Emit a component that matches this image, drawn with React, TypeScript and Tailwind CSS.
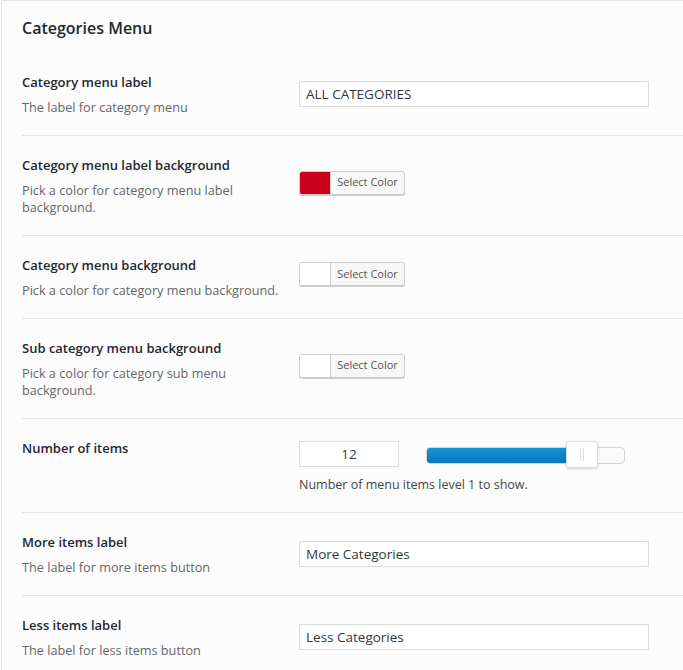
import React from 'react';

const font = { fontFamily: '"Open Sans", "Noto Sans", Arial, sans-serif' };

const Label: React.FC<{ title: string; desc?: string }> = ({ title, desc }) => (
    <div className="w-[277px] shrink-0 self-start pr-[12px]">
        <div className="text-[13px] font-semibold leading-[18px] text-[#23282d]">{title}</div>
        {desc && <div className="mt-[8px] mb-[-1px] text-[12.7px] leading-[17px] text-[#666]">{desc}</div>}
    </div>
);

const TextInput: React.FC<{ value: string }> = ({ value }) => (
    <div className="flex h-[26px] w-[350px] items-center border border-[#ddd] bg-white pl-[6px] text-[13.5px] text-[#32373c] shadow-[inset_0_1px_2px_rgba(0,0,0,0.04)]">
        {value}
    </div>
);

const ColorButton: React.FC<{ color: string }> = ({ color }) => (
    <div className="mb-[6px] flex h-[24px] w-[106px] overflow-hidden rounded-[3px] border border-[#ccc] bg-[#f7f7f7] shadow-[0_1px_0_#ccc]">
        <div className="w-[31px] border-r border-[#ccc]" style={{ backgroundColor: color }} />
        <div className="flex flex-1 items-center justify-center text-[11px] text-[#555]">Select Color</div>
    </div>
);

const Row: React.FC<{ children: React.ReactNode; last?: boolean }> = ({ children, last }) => (
    <div className={`flex pt-[20px] pb-[20px] ${last ? '' : 'border-b border-[#e5e5e5]'}`}>{children}</div>
);

const Slider: React.FC = () => (
    <div className="relative ml-[27px] mt-[3px] h-[17px] w-[199px]">
        <div className="flex h-full w-full overflow-hidden rounded-[4px] border border-[#d5d5d5] bg-[#fafafa]">
            <div className="h-full w-[146px] bg-gradient-to-b from-[#1492d6] to-[#0679bc]" />
        </div>
        <div className="absolute left-[140px] top-[-6px] flex h-[27px] w-[32px] items-center justify-center gap-[2px] rounded-[3px] border border-[#dcdcdc] bg-white shadow-[0_1px_3px_rgba(0,0,0,0.15)]">
            <div className="h-[13px] w-px bg-[#ddd]" />
            <div className="h-[13px] w-px bg-[#ddd]" />
        </div>
    </div>
);

const App: React.FC = () => {
    return (
        <div className="min-h-screen bg-white pl-px" style={font}>
            <div className="min-h-[670px] border-l border-t border-[#e3e3e3] bg-[#fcfcfc] pl-[20px]">
                <div className="pt-[16px] pb-[14px] text-[16px] font-semibold leading-[22px] text-[#23282d]">Categories Menu</div>

                <Row>
                    <Label title="Category menu label" desc="The label for category menu" />
                    <div className="self-center"><TextInput value="ALL CATEGORIES" /></div>
                </Row>

                <Row>
                    <Label title="Category menu label background" desc="Pick a color for category menu label background." />
                    <div className="self-center"><ColorButton color="#c8001b" /></div>
                </Row>

                <Row>
                    <Label title="Category menu background" desc="Pick a color for category menu background." />
                    <div className="self-center"><ColorButton color="#ffffff" /></div>
                </Row>

                <Row>
                    <Label title="Sub category menu background" desc="Pick a color for category sub menu background." />
                    <div className="self-center"><ColorButton color="#ffffff" /></div>
                </Row>

                <Row>
                    <Label title="Number of items" />
                    <div className="flex flex-col">
                        <div className="mt-[2px] flex items-center">
                            <div className="flex h-[26px] w-[100px] items-center justify-center border border-[#ddd] bg-white text-[13.5px] text-[#32373c]">12</div>
                            <Slider />
                        </div>
                        <div className="mt-[9px] mb-[-1px] text-[12.5px] leading-[17px] text-[#444]">Number of menu items level 1 to show.</div>
                    </div>
                </Row>

                <Row>
                    <Label title="More items label" desc="The label for more items button" />
                    <div className="self-center"><TextInput value="More Categories" /></div>
                </Row>

                <Row last>
                    <Label title="Less items label" desc="The label for less items button" />
                    <div className="self-center"><TextInput value="Less Categories" /></div>
                </Row>
            </div>
        </div>
    );
};

export default App;
